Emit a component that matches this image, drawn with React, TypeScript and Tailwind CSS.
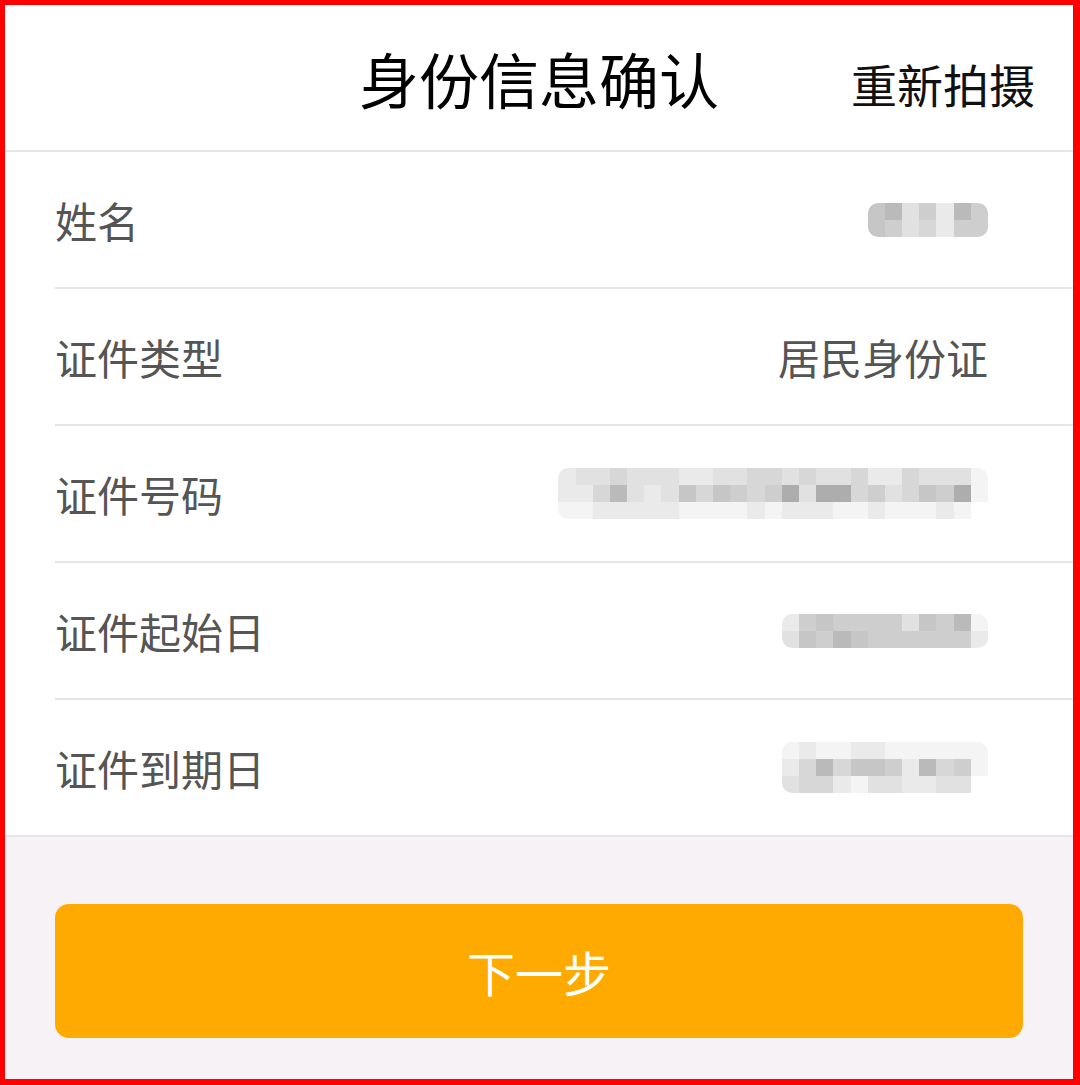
const SHADES: Record<string, string> = {
  "0": "#ffffff",
  "1": "#f4f4f4",
  "2": "#eaeaea",
  "3": "#e1e1e1",
  "4": "#d7d7d7",
  "5": "#cecece",
  "6": "#c6c6c6",
  "7": "#bababa",
  "8": "#adadad",
};

// pixelated (redacted) value
const Mosaic = ({ cells }: { cells: string[] }) => (
  <div className="flex flex-col overflow-hidden rounded-[10px]">
    {cells.map((row, r) => (
      <div key={r} className="flex">
        {row.split("").map((c, i) => (
          <span key={i} className="block h-[17px] w-[17.2px]" style={{ background: SHADES[c] }} />
        ))}
      </div>
    ))}
  </div>
);

const rows = [
  { label: "姓名", value: <Mosaic cells={["6735275", "6534255"]} /> },
  { label: "证件类型", value: <span className="text-[42px] leading-none text-[#555555]">居民身份证</span> },
  {
    label: "证件号码",
    value: (
      <Mosaic
        cells={[
          "2334333223344343342243331",
          "2247323646545838845346581",
          "1122222111121222112111210",
        ]}
      />
    ),
  },
  { label: "证件起始日", value: <Mosaic cells={["256555536571", "365765555552"]} /> },
  {
    label: "证件到期日",
    value: <Mosaic cells={["121122111111", "247466527451", "344213322330"]} />,
  },
];

export default function App() {
  return (
    <div
      className="flex h-[1085px] w-[1080px] flex-col border-t-[5px] border-r-[7px] border-b-[6px] border-l-[5px] border-[#ff0000] bg-white"
      style={{ fontFamily: '"Noto Sans CJK SC", "Noto Sans", sans-serif' }}
    >
      {/* Header */}
      <div className="grid h-[147px] shrink-0 grid-cols-[1fr_auto_1fr] items-center border-b-2 border-[#e6e6e6]">
        <div />
        <h1 className="text-[60px] leading-none font-normal text-black">身份信息确认</h1>
        <div className="flex justify-end pt-[10px] pr-[38px]">
          <button className="text-[46px] leading-none text-[#111111]">重新拍摄</button>
        </div>
      </div>

      {/* Info rows */}
      <div className="border-b-2 border-[#e6e6e6]">
        {rows.map((row, idx) => (
          <div
            key={row.label}
            className={
              idx < rows.length - 1
                ? "ml-[50px] flex h-[137px] items-center justify-between border-b-2 border-[#e6e6e6] pr-[85px]"
                : "ml-[50px] flex h-[135px] items-center justify-between pr-[85px]"
            }
          >
            <span className="text-[42px] leading-none text-[#555555]">{row.label}</span>
            {row.value}
          </div>
        ))}
      </div>

      {/* Footer */}
      <div className="flex-1 bg-[#f6f2f6] pt-[67px] pr-[50px] pl-[50px]">
        <button className="flex h-[134px] w-full items-center justify-center rounded-[14px] bg-[#ffaa00] text-[48px] leading-none text-white">
          下一步
        </button>
      </div>
    </div>
  );
}
